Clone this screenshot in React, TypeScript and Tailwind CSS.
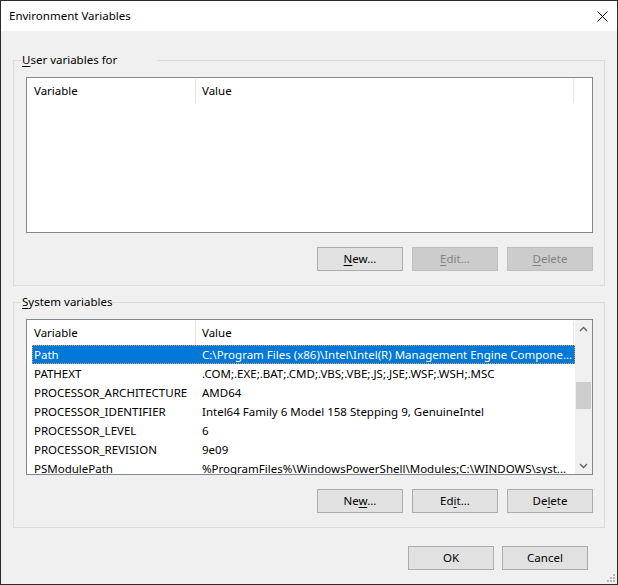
import React from "react";

type Row = { name: string; value: string; selected?: boolean };

const systemRows: Row[] = [
    { name: "Path", value: "C:\\Program Files (x86)\\Intel\\Intel(R) Management Engine Compone...", selected: true },
    { name: "PATHEXT", value: ".COM;.EXE;.BAT;.CMD;.VBS;.VBE;.JS;.JSE;.WSF;.WSH;.MSC" },
    { name: "PROCESSOR_ARCHITECTURE", value: "AMD64" },
    { name: "PROCESSOR_IDENTIFIER", value: "Intel64 Family 6 Model 158 Stepping 9, GenuineIntel" },
    { name: "PROCESSOR_LEVEL", value: "6" },
    { name: "PROCESSOR_REVISION", value: "9e09" },
    { name: "PSModulePath", value: "%ProgramFiles%\\WindowsPowerShell\\Modules;C:\\WINDOWS\\syst..." },
];

interface ButtonProps {
    before?: string;
    mnemonic?: string;
    after?: string;
    disabled?: boolean;
}

function WinButton({ before = "", mnemonic = "", after = "", disabled }: ButtonProps) {
    return (
        <div
            className={`w-[86px] h-[24px] flex items-center justify-center border ${
                disabled ? "bg-[#cccccc] border-[#bfbfbf] text-[#838383]" : "bg-[#e1e1e1] border-[#adadad] text-black"
            }`}
        >
            <span className="whitespace-pre">
                {before}
                <span className="underline underline-offset-[2px]">{mnemonic}</span>
                {after}
            </span>
        </div>
    );
}

function ListHeader() {
    return (
        <div className="h-[25px] flex shrink-0">
            <div className="w-[169px] pl-[7px] flex items-center border-r border-[#e5e5e5] mt-[1px]">Variable</div>
            <div className="w-[378px] pl-[6px] flex items-center border-r border-[#e5e5e5] mt-[1px]">Value</div>
        </div>
    );
}

function Chevron({ up }: { up?: boolean }) {
    return (
        <svg width="9" height="6" viewBox="0 0 9 6" className="block">
            <path
                d={up ? "M1 5 L4.5 1.5 L8 5" : "M1 1 L4.5 4.5 L8 1"}
                fill="none"
                stroke="#606060"
                strokeWidth="1.3"
            />
        </svg>
    );
}

function Scrollbar() {
    return (
        <div className="w-[17px] shrink-0 bg-[#f0f0f0] flex flex-col">
            <div className="h-[17px] flex items-center justify-center">
                <Chevron up />
            </div>
            <div className="flex-1 flex flex-col px-[1px]">
                <div className="mt-[45px] h-[27px] bg-[#cdcdcd]" />
            </div>
            <div className="h-[17px] flex items-center justify-center">
                <Chevron />
            </div>
        </div>
    );
}

function GroupBox({
    label,
    mnemonic,
    legendWidth,
    children,
    className = "",
}: {
    label: string;
    mnemonic: string;
    legendWidth: string;
    children: React.ReactNode;
    className?: string;
}) {
    return (
        <fieldset className={`min-w-0 border border-[#dcdcdc] ${className}`}>
            <legend className={`ml-[7px] pl-[1px] h-[16px] leading-[16px] whitespace-nowrap ${legendWidth}`}>
                <span className="underline underline-offset-[2px]">{mnemonic}</span>
                {label}
            </legend>
            <div className="pl-[12px] pr-[11px] pb-[14px]">{children}</div>
        </fieldset>
    );
}

export default function App() {
    return (
        <div className="relative w-[618px] h-[585px] border border-[#2b2b2b] bg-[#f0f0f0] flex flex-col text-[11.5px] text-black font-['Noto_Sans',sans-serif] overflow-hidden">
            <div className="h-[30px] bg-white flex items-center justify-between pl-[8px] pr-[9px] shrink-0">
                <span>Environment Variables</span>
                <svg width="11" height="11" viewBox="0 0 11 11">
                    <path d="M0.5 0.5 L10.5 10.5 M10.5 0.5 L0.5 10.5" stroke="#000" strokeWidth="1" />
                </svg>
            </div>

            <div className="flex-1 flex flex-col px-[12px]">
                <GroupBox label="ser variables for" mnemonic="U" legendWidth="w-[136px]" className="mt-[21px]">
                    <div className="mt-[9px] h-[156px] border border-[#828790] bg-white flex flex-col">
                        <ListHeader />
                    </div>
                    <div className="mt-[14px] flex justify-end gap-[9px]">
                        <WinButton mnemonic="N" after="ew..." />
                        <WinButton mnemonic="E" after="dit..." disabled />
                        <WinButton mnemonic="D" after="elete" disabled />
                    </div>
                </GroupBox>

                <GroupBox label="ystem variables" mnemonic="S" legendWidth="w-[88px]" className="mt-[8px]">
                    <div className="mt-[9px] h-[156px] border border-[#828790] bg-white flex">
                        <div className="flex-1 min-w-0 flex flex-col overflow-hidden">
                            <ListHeader />
                            {systemRows.map((row) => (
                                <div
                                    key={row.name}
                                    className={`ml-[5px] h-[19px] shrink-0 flex items-center whitespace-nowrap ${
                                        row.selected
                                            ? "bg-[#0078d7] text-white border border-dotted border-[#d8a050]"
                                            : "border border-transparent"
                                    }`}
                                >
                                    <div className="w-[163px] shrink-0 pl-[1px] overflow-hidden">{row.name}</div>
                                    <div className="flex-1 min-w-0 pl-[6px] overflow-hidden">{row.value}</div>
                                </div>
                            ))}
                        </div>
                        <Scrollbar />
                    </div>
                    <div className="mt-[14px] flex justify-end gap-[9px]">
                        <WinButton before="Ne" mnemonic="w" after="..." />
                        <WinButton before="Ed" mnemonic="i" after="t..." />
                        <WinButton before="De" mnemonic="l" after="ete" />
                    </div>
                </GroupBox>

                <div className="mt-[18px] flex justify-end gap-[8px] pr-[17px]">
                    <WinButton after="OK" />
                    <WinButton after="Cancel" />
                </div>
            </div>

            <svg width="10" height="10" viewBox="0 0 10 10" className="absolute right-[1px] bottom-[1px]">
                <g fill="#b8b8b8">
                    <rect x="7" y="1" width="2" height="2" />
                    <rect x="4" y="4" width="2" height="2" />
                    <rect x="7" y="4" width="2" height="2" />
                    <rect x="1" y="7" width="2" height="2" />
                    <rect x="4" y="7" width="2" height="2" />
                    <rect x="7" y="7" width="2" height="2" />
                </g>
            </svg>
        </div>
    );
}
